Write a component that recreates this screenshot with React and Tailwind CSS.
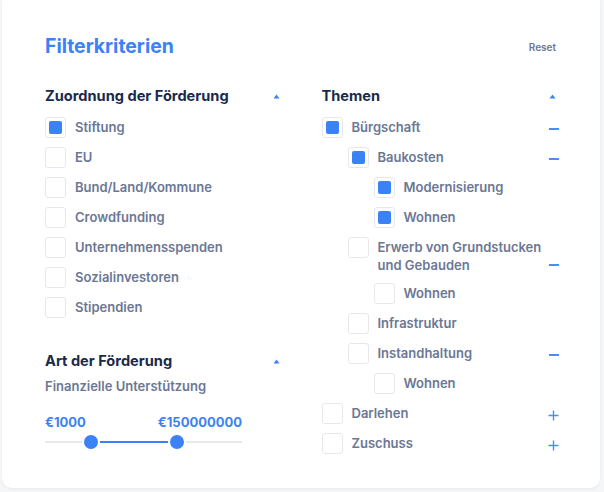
import React from 'react';

const Caret = () => (
  <svg width="7" height="5" viewBox="0 0 7 5" className="shrink-0">
    <path d="M3.5 0.5 L6.5 4.5 L0.5 4.5 Z" fill="#3b82f6" />
  </svg>
);

const Minus = () => <span className="block w-[10px] h-[1.5px] bg-[#4b8df6]" />;

const Plus = () => (
  <svg width="11" height="11" viewBox="0 0 11 11">
    <path d="M5.5 0.5 V10.5 M0.5 5.5 H10.5" stroke="#4b8df6" strokeWidth="1.4" />
  </svg>
);

const Box = ({ checked }) => (
  <span className="w-[21px] h-[21px] shrink-0 rounded-[3px] border border-[#e6e8ee] bg-white flex items-center justify-center">
    {checked && <span className="w-[13px] h-[13px] rounded-[2px] bg-[#3b82f6]" />}
  </span>
);

const Row = ({ label, checked, level = 0, toggle }) => {
  const pad = ['pl-0', 'pl-[26px]', 'pl-[52px]'][level];
  return (
    <div className={`flex items-start ${pad}`}>
      <Box checked={checked} />
      <span className="ml-[9px] flex-1 text-[13px] leading-[18px] pt-[1px] font-semibold text-[#6b7794] max-w-[170px]">
        {label}
      </span>
      <span className="ml-auto -mr-[2px] self-end h-[18px] w-[12px] flex items-center justify-end">
        {toggle === 'minus' && <Minus />}
        {toggle === 'plus' && <Plus />}
      </span>
    </div>
  );
};

const Heading = ({ children }) => (
  <div className="flex items-center justify-between h-[20px]">
    <h3 className="text-[14.6px] font-bold text-[#1a2a4c]">{children}</h3>
    <span className="pr-[1px] -mt-[2px]"><Caret /></span>
  </div>
);

const zuordnung = [
  ['Stiftung', true],
  ['EU', false],
  ['Bund/Land/Kommune', false],
  ['Crowdfunding', false],
  ['Unternehmensspenden', false],
  ['Sozialinvestoren', false],
  ['Stipendien', false],
];

const themen = [
  { label: 'Bürgschaft', checked: true, level: 0, toggle: 'minus' },
  { label: 'Baukosten', checked: true, level: 1, toggle: 'minus' },
  { label: 'Modernisierung', checked: true, level: 2 },
  { label: 'Wohnen', checked: true, level: 2 },
  { label: 'Erwerb von Grundstucken und Gebauden', level: 1, toggle: 'minus' },
  { label: 'Wohnen', level: 2 },
  { label: 'Infrastruktur', level: 1 },
  { label: 'Instandhaltung', level: 1, toggle: 'minus' },
  { label: 'Wohnen', level: 2 },
  { label: 'Darlehen', level: 0, toggle: 'plus' },
  { label: 'Zuschuss', level: 0, toggle: 'plus' },
];

export default function App() {
  return (
    <div className="w-[604px] h-[492px] bg-[#f5f6f8] pl-[2px] pr-[4px] pb-[4px]" style={{ fontFamily: 'Inter, "Noto Sans", sans-serif' }}>
      <div className="h-full bg-white rounded-b-[10px] shadow-[0_1px_3px_rgba(20,30,60,0.06)] px-[43px] pt-[34px]">
        <div className="flex items-center justify-between">
          <h1 className="text-[19.4px] leading-[24px] font-bold text-[#3b82f6]">Filterkriterien</h1>
          <button className="text-[10px] font-semibold text-[#6b7794] mt-[2px] mr-[1px]">Reset</button>
        </div>

        <div className="mt-[29px] grid grid-cols-2 gap-x-[41px]">
          <div>
            <Heading>Zuordnung der Förderung</Heading>
            <div className="mt-[10px] flex flex-col gap-[9px]">
              {zuordnung.map(([label, checked]) => (
                <Row key={label} label={label} checked={checked} />
              ))}
            </div>

            <div className="mt-[34px]">
              <Heading>Art der Förderung</Heading>
              <p className="mt-[5px] text-[13px] font-semibold text-[#6b7794]">Finanzielle Unterstützung</p>
              <div className="mt-[16px] w-[197px] flex justify-between text-[13px] font-bold text-[#3b82f6]">
                <span>€1000</span>
                <span>€150000000</span>
              </div>
              <div className="relative w-[197px] h-[18px] mt-[1px]">
                <div className="absolute left-0 right-0 top-[8px] h-[2px] bg-[#e6e8ee]" />
                <div className="absolute left-[46px] w-[86px] top-[8px] h-[2px] bg-[#3b82f6]" />
                <div className="absolute left-[37px] top-0 w-[18px] h-[18px] rounded-full bg-[#3b82f6] border-2 border-white" />
                <div className="absolute left-[123px] top-0 w-[18px] h-[18px] rounded-full bg-[#3b82f6] border-2 border-white" />
              </div>
            </div>
          </div>

          <div>
            <Heading>Themen</Heading>
            <div className="mt-[10px] flex flex-col gap-[9px]">
              {themen.map((t, i) => (
                <Row key={i} {...t} />
              ))}
            </div>
          </div>
        </div>
      </div>
    </div>
  );
}
